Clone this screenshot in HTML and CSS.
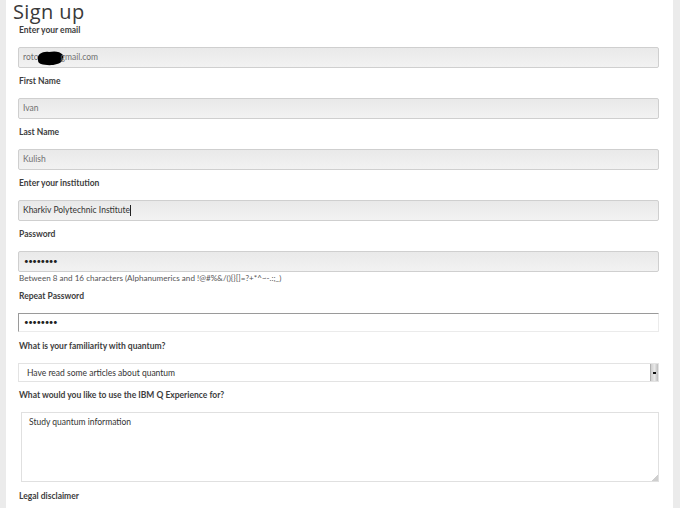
FILE: index.html
```html
<!DOCTYPE html>
<html>
<head>
<meta charset="utf-8">
<link rel="stylesheet" href="styles.css">
</head>
<body>
<div class="panel">
  <h1 class="title">Sign up</h1>
  <div class="field">
    <div class="label">Enter your email</div>
    <div class="input muted">roto<svg class="blob" width="28" height="16" viewBox="0 0 28 16"><path d="M2 9 C1 4 7 1 13 2 C18 1 24 1 27 5 C28 9 26 13 21 14 C15 16 9 15 5 14 C2 13 2 11 2 9Z" fill="#000"/></svg>gmail.com</div>
  </div>
  <div class="field">
    <div class="label">First Name</div>
    <div class="input muted">Ivan</div>
  </div>
  <div class="field">
    <div class="label">Last Name</div>
    <div class="input muted">Kulish</div>
  </div>
  <div class="field">
    <div class="label">Enter your institution</div>
    <div class="input dark">Kharkiv Polytechnic Institute<span class="caret"></span></div>
  </div>
  <div class="field pw">
    <div class="label">Password</div>
    <div class="input dots">&#8226;&#8226;&#8226;&#8226;&#8226;&#8226;&#8226;&#8226;</div>
    <div class="help">Between 8 and 16 characters (Alphanumerics and !@#%&amp;/(){}[]=?+*^~-.:;_)</div>
  </div>
  <div class="field">
    <div class="label">Repeat Password</div>
    <div class="input focus dots">&#8226;&#8226;&#8226;&#8226;&#8226;&#8226;&#8226;&#8226;</div>
  </div>
  <div class="field">
    <div class="label">What is your familiarity with quantum?</div>
    <div class="select"><span class="sel-text">Have read some articles about quantum</span><span class="arrow"><span class="dash"></span></span></div>
  </div>
  <div class="field">
    <div class="label">What would you like to use the IBM Q Experience for?</div>
    <div class="textarea">Study quantum information<span class="grip"></span></div>
  </div>
  <div class="field">
    <div class="label">Legal disclaimer</div>
  </div>
</div>
</body>
</html>
```
FILE: styles.css
```css
html, body {
  margin: 0;
  padding: 0;
  background: #ebebeb;
  height: 100%;
  overflow: hidden;
}
body {
  font-family: Lato, "Open Sans", sans-serif;
  color: #333;
}
.panel {
  margin-left: 6px;
  width: 667px;
  height: 508px;
  background: #fff;
  box-sizing: border-box;
  padding: 0 14px 0 12px;
}
.title {
  margin: 0 0 0 -5px;
  padding: 0;
  font-family: "Open Sans", sans-serif;
  font-weight: 400;
  font-size: 20px;
  letter-spacing: 0.4px;
  line-height: 24px;
  height: 24px;
  color: #3a3a3a;
}
.field {
  display: flex;
  flex-direction: column;
}
.label {
  font-size: 8.5px;
  font-weight: 700;
  line-height: 12px;
  height: 12px;
  padding-left: 1px;
  color: #3d3d3d;
  margin-bottom: 11px;
}
.input {
  height: 21px;
  box-sizing: border-box;
  border: 1px solid #cfcfcf;
  border-radius: 2px;
  background: linear-gradient(#e9e9e9, #f2f2f2);
  font-size: 8.5px;
  line-height: 19px;
  padding-left: 4px;
  margin-bottom: 7px;
  display: flex;
  align-items: center;
}
.muted { color: #707070; }
.dark { color: #333; }
.caret {
  display: inline-block;
  width: 1px;
  height: 11px;
  background: #222;
}
.blob {
  margin: 0 -3px 0 -3px;
}
.dots {
  color: #222;
  font-size: 8px;
  letter-spacing: -0.5px;
  padding-left: 5px;
}
.pw .input { margin-bottom: 1px; }
.help {
  font-size: 8.1px;
  line-height: 10px;
  height: 10px;
  color: #555;
  margin-bottom: 7px;
  padding-left: 1px;
}
.focus {
  height: 19px;
  border: 1px solid #ebebeb;
  border-top: 1px solid #9a9a9a;
  border-left: 1px solid #9a9a9a;
  border-radius: 0;
  background: #fff;
  margin-bottom: 8px;
}
.select {
  height: 19px;
  box-sizing: border-box;
  border: 1px solid #e3e3e3;
  background: #fff;
  display: flex;
  align-items: center;
  justify-content: space-between;
  margin-bottom: 7px;
}
.sel-text {
  font-size: 8.5px;
  color: #333;
  padding-left: 8px;
}
.arrow {
  width: 7px;
  height: 17px;
  background: linear-gradient(90deg, #cfcfcf, #e8e8e8 50%, #bdbdbd);
  border-left: 1px solid #b0b0b0;
  display: flex;
  align-items: center;
  justify-content: center;
}
.dash {
  width: 3px;
  height: 2px;
  background: #111;
}
.textarea {
  margin-left: 3px;
  height: 70px;
  box-sizing: border-box;
  border: 1px solid #e0e0e0;
  background: #fff;
  font-size: 8.5px;
  color: #333;
  padding: 3px 0 0 7px;
  line-height: 12px;
  position: relative;
  margin-bottom: 8px;
}
.grip {
  position: absolute;
  right: 0;
  bottom: 0;
  width: 6px;
  height: 6px;
  background: linear-gradient(135deg, transparent 50%, #cfcfcf 50%);
}
```
